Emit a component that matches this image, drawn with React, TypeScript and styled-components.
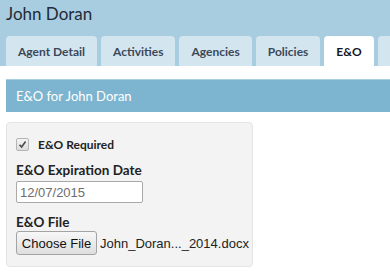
import React from 'react';
import styled, { createGlobalStyle } from 'styled-components';

const GlobalStyle = createGlobalStyle`
  body {
    margin: 0;
    background: #fff;
    font-family: 'Lato', 'Open Sans', sans-serif;
  }
`;

const Page = styled.div`
  width: 390px;
  height: 277px;
  overflow: hidden;
`;

const Header = styled.div`
  background: #a9cde0;
  height: 66px;
  display: flex;
  flex-direction: column;
  justify-content: space-between;
  padding-left: 6px;
`;

const Title = styled.h1`
  margin: 0;
  padding-top: 3px;
  font-size: 17px;
  font-weight: 400;
  color: #1f2a36;
  line-height: 22px;
`;

const TabBar = styled.div`
  display: flex;
  gap: 4px;
  height: 30px;
`;

const Tab = styled.div<{ $active?: boolean }>`
  flex: none;
  display: flex;
  align-items: center;
  padding: 0 12px;
  border-radius: 4px 4px 0 0;
  background: ${p => (p.$active ? '#fff' : '#d3e6f0')};
  color: ${p => (p.$active ? '#15151f' : '#3c4858')};
  font-weight: 700;
  font-size: 12px;
`;

const Content = styled.div`
  padding: 13px 0 0 6px;
`;

const PanelHeader = styled.div`
  height: 33px;
  background: #7db5d0;
  border-top: 1px solid #a6cde0;
  box-sizing: border-box;
  display: flex;
  align-items: center;
  padding-left: 10px;
  color: #fff;
  font-size: 13px;
`;

const Fieldset = styled.div`
  margin-top: 10px;
  width: 247px;
  height: 145px;
  box-sizing: border-box;
  background: #f3f3f3;
  border: 1px solid #e4e4e4;
  border-radius: 4px;
  padding: 15px 0 0 9px;
  display: flex;
  flex-direction: column;
`;

const CheckRow = styled.label`
  display: flex;
  align-items: center;
  gap: 9px;
  height: 13px;
  font-weight: 700;
  font-size: 12px;
  color: #222;
`;

const CheckBox = styled.span`
  width: 11px;
  height: 11px;
  border: 1px solid #b4b4b4;
  border-radius: 2px;
  background: linear-gradient(#f4f4f4, #dcdcdc);
  display: flex;
  align-items: center;
  justify-content: center;
`;

const FieldLabel = styled.div<{ $top: number }>`
  margin-top: ${p => p.$top}px;
  font-weight: 700;
  font-size: 13.5px;
  color: #222;
  line-height: 16px;
`;

const TextInput = styled.div`
  margin-top: 3px;
  width: 127px;
  height: 22px;
  box-sizing: border-box;
  border: 1px solid #a9a9a9;
  border-radius: 2px;
  background: #fff;
  padding-left: 3px;
  display: flex;
  align-items: center;
  font-family: 'Liberation Sans', Arial, sans-serif;
  font-size: 13px;
  color: #6d6d6d;
`;

const FileRow = styled.div`
  margin-top: 1px;
  display: flex;
  align-items: center;
  gap: 3px;
  font-family: 'Liberation Sans', Arial, sans-serif;
  font-size: 13px;
  color: #222;
`;

const FileButton = styled.div`
  width: 81px;
  height: 24px;
  box-sizing: border-box;
  border: 1px solid #a3a3a3;
  border-radius: 3px;
  background: linear-gradient(#f7f7f7, #dedede);
  display: flex;
  align-items: center;
  justify-content: center;
  font-size: 13px;
  color: #111;
`;

const tabs = ['Agent Detail', 'Activities', 'Agencies', 'Policies', 'E&O'];

export default function App() {
  return (
    <Page>
      <GlobalStyle />
      <Header>
        <Title>John Doran</Title>
        <TabBar>
          {tabs.map(t => (
            <Tab key={t} $active={t === 'E&O'}>{t}</Tab>
          ))}
          <Tab />
        </TabBar>
      </Header>
      <Content>
        <PanelHeader>E&amp;O for John Doran</PanelHeader>
        <Fieldset>
          <CheckRow>
            <CheckBox>
              <svg width="9" height="9" viewBox="0 0 9 9">
                <path d="M1.5 4.8 L3.6 7 L7.6 1.6" fill="none" stroke="#4a4a4a" strokeWidth="1.6" />
              </svg>
            </CheckBox>
            E&amp;O Required
          </CheckRow>
          <FieldLabel $top={11}>E&amp;O Expiration Date</FieldLabel>
          <TextInput>12/07/2015</TextInput>
          <FieldLabel $top={11}>E&amp;O File</FieldLabel>
          <FileRow>
            <FileButton>Choose File</FileButton>
            John_Doran..._2014.docx
          </FileRow>
        </Fieldset>
      </Content>
    </Page>
  );
}
